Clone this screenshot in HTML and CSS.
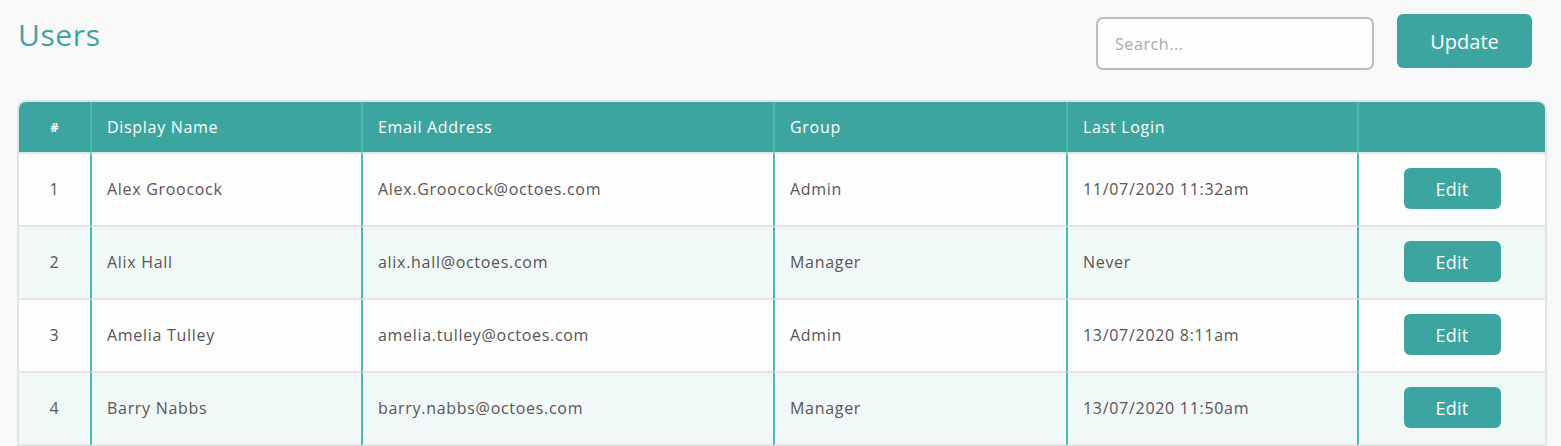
FILE: index.html
```html
<!DOCTYPE html>
<html>
<head>
<meta charset="utf-8">
<link rel="stylesheet" href="styles.css">
</head>
<body>
<div class="page">
  <div class="topbar">
    <h1 class="title">Users</h1>
    <div class="actions">
      <input class="search" type="text" placeholder="Search...">
      <button class="btn-update">Update</button>
    </div>
  </div>
  <div class="table-wrap">
    <table class="users">
      <colgroup>
        <col class="c-num"><col class="c-name"><col class="c-email"><col class="c-group"><col class="c-login"><col class="c-act">
      </colgroup>
      <thead>
        <tr>
          <th class="num">#</th>
          <th>Display Name</th>
          <th>Email Address</th>
          <th>Group</th>
          <th>Last Login</th>
          <th></th>
        </tr>
      </thead>
      <tbody>
        <tr>
          <td class="num">1</td><td>Alex Groocock</td><td>Alex.Groocock@octoes.com</td><td>Admin</td><td>11/07/2020 11:32am</td><td class="act"><button class="btn-edit">Edit</button></td>
        </tr>
        <tr class="alt">
          <td class="num">2</td><td>Alix Hall</td><td>alix.hall@octoes.com</td><td>Manager</td><td>Never</td><td class="act"><button class="btn-edit">Edit</button></td>
        </tr>
        <tr>
          <td class="num">3</td><td>Amelia Tulley</td><td>amelia.tulley@octoes.com</td><td>Admin</td><td>13/07/2020 8:11am</td><td class="act"><button class="btn-edit">Edit</button></td>
        </tr>
        <tr class="alt">
          <td class="num">4</td><td>Barry Nabbs</td><td>barry.nabbs@octoes.com</td><td>Manager</td><td>13/07/2020 11:50am</td><td class="act"><button class="btn-edit">Edit</button></td>
        </tr>
      </tbody>
    </table>
  </div>
</div>
</body>
</html>
```
FILE: styles.css
```css
* { box-sizing: border-box; }
html, body { margin: 0; padding: 0; background: #f8f8f8; }
body { font-family: "Open Sans", "DejaVu Sans", sans-serif; color: #5a5454; }
.page { padding: 14px 14px 0 17px; }
.topbar { display: flex; justify-content: space-between; align-items: flex-start; height: 86px; }
.title { margin: 1px 0 0 1px; font-size: 30px; font-weight: 400; color: #3da5a0; line-height: 40px; letter-spacing: 0.6px; }
.actions { display: flex; align-items: flex-start; gap: 23px; margin-right: 15px; }
.search { width: 278px; height: 53px; margin-top: 3px; border: 2px solid #bcbcbc; border-radius: 7px; background: #fdfdfd; padding: 0 17px; font-family: inherit; font-size: 16px; letter-spacing: 0.6px; color: #555; outline: none; }
.search::placeholder { color: #a9a9a9; }
.btn-update { width: 135px; height: 54px; border: none; border-radius: 6px; background: #3da5a0; color: #fff; font-family: inherit; font-size: 20px; cursor: pointer; }
.table-wrap { border: 2px solid #e3e3e3; border-bottom: none; border-radius: 9px 9px 0 0; overflow: hidden; background: #fdfdfd; }
.users { width: 100%; table-layout: fixed; border-collapse: separate; border-spacing: 0; }
.c-num { width: 71px; } .c-name { width: 271px; } .c-email { width: 412px; } .c-group { width: 293px; } .c-login { width: 291px; } .c-act { width: 188px; }
.users th, .users td { text-align: left; padding: 0 0 0 15px; font-size: 16px; font-weight: 400; letter-spacing: 0.7px; border-left: 2px solid #4ab9b2; border-bottom: 2px solid #e5e5e5; white-space: nowrap; }
.users th:first-child, .users td:first-child { border-left: none; }
.users th { height: 52px; background: #3da5a0; color: #fff; }
.users td { height: 73px; color: #5a5454; padding-bottom: 1px; }
.users tr.alt td { background: #f1f9f8; }
.users .num { text-align: center; padding: 0; }
.users td.num { padding-bottom: 1px; }
.users th.num { font-size: 13px; font-weight: 700; letter-spacing: 0; }
.users td.act { text-align: center; padding: 0 0 2px 0; }
.btn-edit { width: 97px; height: 41px; border: none; border-radius: 6px; background: #3da5a0; color: #fff; font-family: inherit; font-size: 18px; letter-spacing: 0.3px; cursor: pointer; vertical-align: middle; }
```
